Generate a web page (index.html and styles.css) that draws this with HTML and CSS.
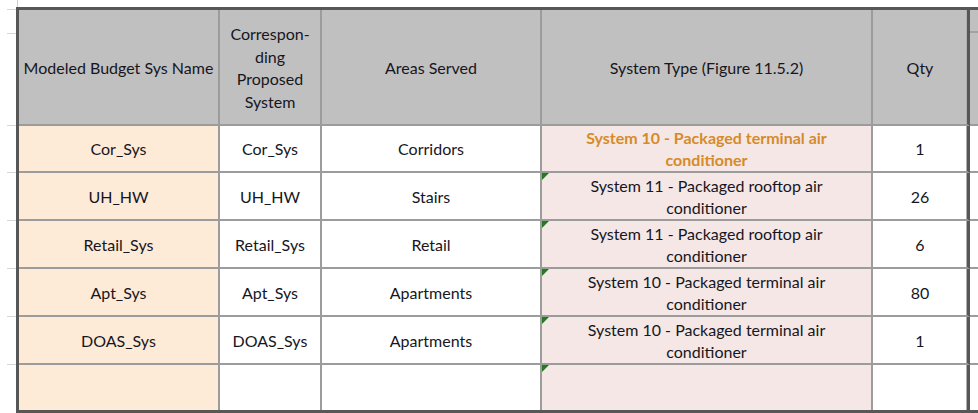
FILE: index.html
```html
<!DOCTYPE html>
<html>
<head>
<meta charset="utf-8">
<link rel="stylesheet" href="styles.css">
</head>
<body>
<div class="page">
  <div class="gutter">
    <div class="stub s1"></div>
    <div class="stub s2"></div>
    <div class="stub s3"></div>
    <div class="stub s4"></div>
    <div class="stub s4b"></div>
    <div class="stub s4b"></div>
    <div class="stub s4b"></div>
    <div class="stub s4b"></div>
  </div>
  <div class="main">
    <div class="topstrip"></div>
    <div class="table">
      <div class="row head">
        <div class="cell">Modeled Budget Sys Name</div>
        <div class="cell">Correspon-<br>ding<br>Proposed<br>System</div>
        <div class="cell">Areas Served</div>
        <div class="cell">System Type (Figure 11.5.2)</div>
        <div class="cell last">Qty</div>
        <div class="cell extra"><div class="extra-top"></div><div class="extra-bot"></div></div>
      </div>
      <div class="row r1">
        <div class="cell peach">Cor_Sys</div>
        <div class="cell">Cor_Sys</div>
        <div class="cell">Corridors</div>
        <div class="cell pink orange">System 10 - Packaged terminal air<br>conditioner</div>
        <div class="cell last">1</div>
        <div class="cell extra"></div>
      </div>
      <div class="row">
        <div class="cell peach">UH_HW</div>
        <div class="cell">UH_HW</div>
        <div class="cell">Stairs</div>
        <div class="cell pink flag">System 11 - Packaged rooftop air<br>conditioner</div>
        <div class="cell last">26</div>
        <div class="cell extra"></div>
      </div>
      <div class="row">
        <div class="cell peach">Retail_Sys</div>
        <div class="cell">Retail_Sys</div>
        <div class="cell">Retail</div>
        <div class="cell pink flag">System 11 - Packaged rooftop air<br>conditioner</div>
        <div class="cell last">6</div>
        <div class="cell extra"></div>
      </div>
      <div class="row">
        <div class="cell peach">Apt_Sys</div>
        <div class="cell">Apt_Sys</div>
        <div class="cell">Apartments</div>
        <div class="cell pink flag">System 10 - Packaged terminal air<br>conditioner</div>
        <div class="cell last">80</div>
        <div class="cell extra"></div>
      </div>
      <div class="row">
        <div class="cell peach">DOAS_Sys</div>
        <div class="cell">DOAS_Sys</div>
        <div class="cell">Apartments</div>
        <div class="cell pink flag">System 10 - Packaged terminal air<br>conditioner</div>
        <div class="cell last">1</div>
        <div class="cell extra"></div>
      </div>
      <div class="row final">
        <div class="cell peach"></div>
        <div class="cell"></div>
        <div class="cell"></div>
        <div class="cell pink flag"></div>
        <div class="cell last"></div>
        <div class="cell extra"></div>
      </div>
    </div>
  </div>
</div>
</body>
</html>
```
FILE: styles.css
```css
* { box-sizing: border-box; }
html, body { margin: 0; padding: 0; background: #fff; }
body {
  width: 978px;
  height: 413px;
  overflow: hidden;
  font-family: Lato, "Open Sans", sans-serif;
  font-size: 16px;
  color: #16161e;
}
.page { display: flex; width: 978px; height: 413px; overflow: hidden; }
.gutter { width: 16px; flex: none; display: flex; flex-direction: column; }
.stub { border-bottom: 1px solid #d6d6d6; margin-left: 7px; flex: none; }
.s1 { height: 10px; }
.s2 { height: 24px; }
.s3 { height: 92px; }
.s4 { height: 47px; }
.s4b { height: 48px; }
.main { flex: none; width: 962px; display: flex; flex-direction: column; }
.topstrip { height: 7px; margin-left: 1px; border-left: 1px solid #d0d0d0; }
.table {
  border-top: 3px solid #575757;
  border-left: 3px solid #575757;
  border-bottom: 3px solid #575757;
  width: 980px;
}
.row {
  display: grid;
  grid-template-columns: 201px 102px 220px 331px 97px 40px;
  grid-template-rows: minmax(0, 1fr);
  height: 48px;
}
.row.head { height: 116px; background: #c0c0c0; }
.row.r1 { height: 47px; }
.row.final { height: 45px; }
.cell {
  border-right: 2px solid #9c9c9c;
  border-bottom: 2px solid #9c9c9c;
  display: flex;
  align-items: center;
  justify-content: center;
  text-align: center;
  line-height: 22px;
  position: relative;
  padding-top: 1px;
  min-height: 0;
}
.head .cell { line-height: 22.5px; padding-top: 2px; }
.row.final .cell { border-bottom: none; }
.cell.last {
  border-right: 3px solid #575757;
  box-shadow: inset -1px 0 0 #b0b0b0;
}
.cell.extra { border-right: none; display: block; padding: 0; }
.head .cell.extra { border-bottom: 2px solid #9c9c9c; padding: 0; }
.extra-top { height: 23px; border-bottom: 2px solid #a2a2a2; }
.peach { background: #fdebd8; }
.pink { background: #f4e7e5; }
.orange { color: #d68b28; font-weight: bold; }
.flag::before {
  content: "";
  position: absolute;
  top: 0;
  left: 0;
  border-top: 7px solid #1f7d1f;
  border-right: 7px solid transparent;
}
```
